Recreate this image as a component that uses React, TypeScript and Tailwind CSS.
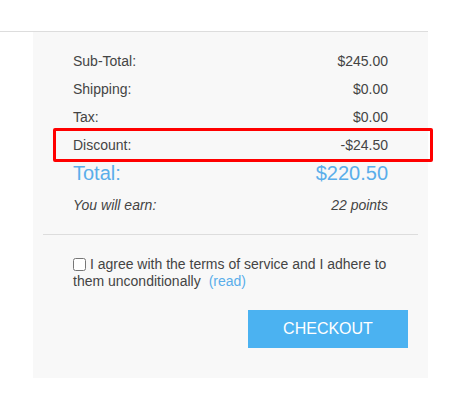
export default function App() {
  const rows = [
    { label: "Sub-Total:", value: "$245.00" },
    { label: "Shipping:", value: "$0.00" },
    { label: "Tax:", value: "$0.00" },
  ];

  return (
    <div className="min-h-[411px] bg-white pt-[31px] font-['Liberation_Sans',Arial,sans-serif] text-[#444]">
      <div className="w-[428px] border-t border-[#dddddd]">
        <div className="ml-[33px] bg-[#f8f8f8] pb-[30px] pt-[15px]">
          <div className="px-[40px] text-[14px]">
            {rows.map((r) => (
              <div key={r.label} className="flex h-[28px] items-center justify-between">
                <span>{r.label}</span>
                <span>{r.value}</span>
              </div>
            ))}
            <div className="-my-[3px] -ml-[20px] -mr-[45px] flex h-[34px] items-center justify-between rounded-[2px] border-[3px] border-[#ff0000] pl-[17px] pr-[42px]">
              <span>Discount:</span>
              <span>-$24.50</span>
            </div>
            <div className="flex h-[28px] items-center justify-between text-[20px] text-[#5aaeea]">
              <span>Total:</span>
              <span>$220.50</span>
            </div>
            <div className="mt-[4px] flex h-[28px] items-center justify-between italic">
              <span>You will earn:</span>
              <span>22 points</span>
            </div>
          </div>

          <div className="mx-[10px] mt-[15px] border-t border-[#dddddd]" />

          <div className="px-[40px] pt-[21px]">
            <label className="block text-[14px] leading-[17px]">
              <input type="checkbox" className="m-0 inline-block h-[13px] w-[13px] align-[-2px]" />{" "}
              I agree with the terms of service and I adhere to them unconditionally
              <a className="ml-[8px] text-[#5aaeea]">(read)</a>
            </label>
          </div>

          <div className="flex justify-end pr-[20px] pt-[20px]">
            <button className="h-[38px] w-[160px] bg-[#4bb2f1] text-[16px] text-white">
              CHECKOUT
            </button>
          </div>
        </div>
      </div>
    </div>
  );
}
